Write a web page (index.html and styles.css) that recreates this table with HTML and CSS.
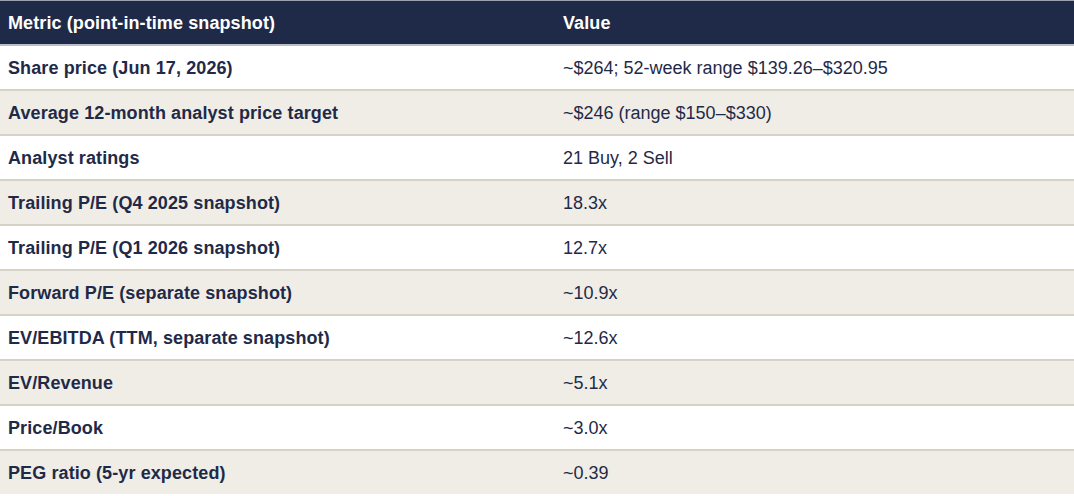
FILE: index.html
```html
<!DOCTYPE html>
<html>
<head>
<meta charset="utf-8">
<link rel="stylesheet" href="styles.css">
</head>
<body>
<table class="metrics">
  <thead>
    <tr><th class="col-metric">Metric (point-in-time snapshot)</th><th>Value</th></tr>
  </thead>
  <tbody>
    <tr><td class="m">Share price (Jun 17, 2026)</td><td>~$264; 52-week range $139.26–$320.95</td></tr>
    <tr><td class="m">Average 12-month analyst price target</td><td>~$246 (range $150–$330)</td></tr>
    <tr><td class="m">Analyst ratings</td><td>21 Buy, 2 Sell</td></tr>
    <tr><td class="m">Trailing P/E (Q4 2025 snapshot)</td><td>18.3x</td></tr>
    <tr><td class="m">Trailing P/E (Q1 2026 snapshot)</td><td>12.7x</td></tr>
    <tr><td class="m">Forward P/E (separate snapshot)</td><td>~10.9x</td></tr>
    <tr><td class="m">EV/EBITDA (TTM, separate snapshot)</td><td>~12.6x</td></tr>
    <tr><td class="m">EV/Revenue</td><td>~5.1x</td></tr>
    <tr><td class="m">Price/Book</td><td>~3.0x</td></tr>
    <tr><td class="m">PEG ratio (5-yr expected)</td><td>~0.39</td></tr>
  </tbody>
</table>
</body>
</html>
```
FILE: styles.css
```css
html, body { margin: 0; padding: 0; background: #ffffff; }
body { font-family: "Liberation Sans", Arial, sans-serif; font-size: 18px; color: #1f2a48; }
.metrics { width: 1074px; border-collapse: collapse; table-layout: fixed; }
.metrics th, .metrics td { text-align: left; padding: 2px 8px 0; height: 41px; border-bottom: 2px solid #d6d2c6; vertical-align: middle; letter-spacing: 0; }
.metrics th { background: #1f2a48; color: #ffffff; font-weight: bold; border-top: 1px solid #9aa0ae; border-bottom: 2px solid #b9bdc8; height: 41px; letter-spacing: 0.1px; }
.metrics .col-metric { width: 539px; }
.metrics td.m { font-weight: bold; letter-spacing: 0.1px; }
.metrics tbody tr:nth-child(even) td { background: #f0ede6; }
.metrics tbody tr:last-child td { border-bottom: none; }
```
